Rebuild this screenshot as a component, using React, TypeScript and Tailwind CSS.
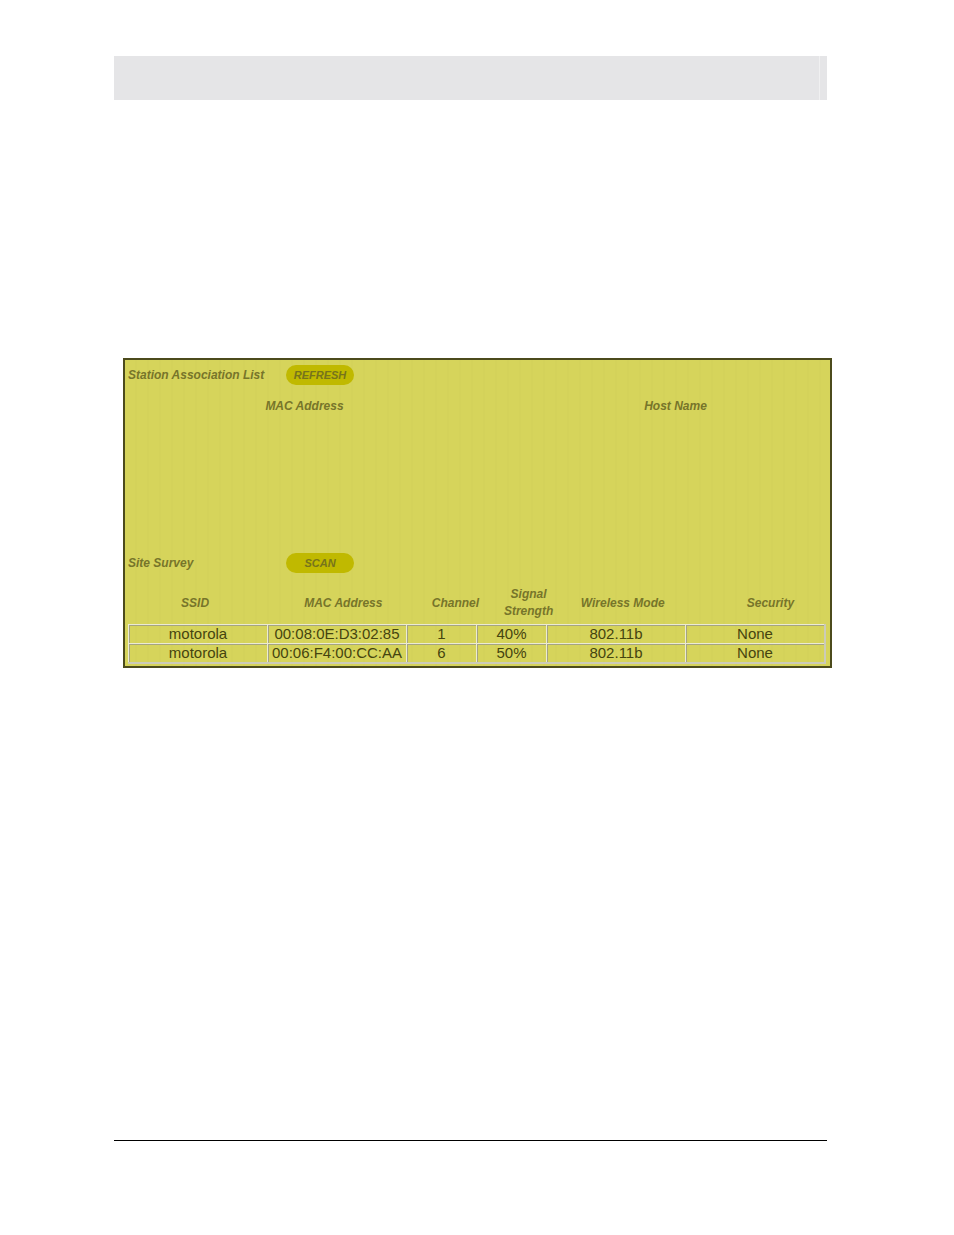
import React from 'react';

const networks = [
  { ssid: 'motorola', mac: '00:08:0E:D3:02:85', channel: '1', signal: '40%', mode: '802.11b', security: 'None' },
  { ssid: 'motorola', mac: '00:06:F4:00:CC:AA', channel: '6', signal: '50%', mode: '802.11b', security: 'None' },
];

const PillButton = ({ children }: { children: React.ReactNode }) => (
  <button
    type="button"
    className="h-5 w-[68px] rounded-full bg-[#c0b900] text-center text-[11px] leading-5 font-bold italic text-[#77741c]"
  >
    {children}
  </button>
);

const StationList = () => (
  <section>
    <div className="flex h-5 items-center">
      <h2 className="w-[158px] shrink-0 text-[12px] font-bold">Station Association List</h2>
      <PillButton>REFRESH</PillButton>
    </div>
    <table className="mt-[13px] w-full table-fixed text-[12px] leading-4">
      <thead>
        <tr>
          <th className="w-1/2 p-0 pl-1 text-center font-bold">MAC Address</th>
          <th className="w-1/2 p-0 pl-12 text-center font-bold">Host Name</th>
        </tr>
      </thead>
      <tbody />
    </table>
  </section>
);

const cell =
  'border-t border-l border-[#ecebd2] p-0 text-center whitespace-nowrap shadow-[inset_1px_1px_0_#a5a481]';

const SiteSurvey = () => (
  <section className="mt-[139px]">
    <div className="flex h-5 items-center">
      <h2 className="w-[158px] shrink-0 text-[12px] font-bold">Site Survey</h2>
      <PillButton>SCAN</PillButton>
    </div>
    <table className="mt-[13px] block w-full">
      <thead className="block text-[12px] leading-[17px]">
        <tr className="grid grid-cols-[134fr_162fr_62fr_84fr_104fr_151fr] items-center pb-1">
          <th className="p-0 text-center font-bold">SSID</th>
          <th className="p-0 text-center font-bold">MAC Address</th>
          <th className="p-0 text-center font-bold">Channel</th>
          <th className="p-0 text-center font-bold">
            Signal
            <br />
            Strength
          </th>
          <th className="p-0 text-center font-bold">Wireless Mode</th>
          <th className="p-0 pl-10 text-center font-bold">Security</th>
        </tr>
      </thead>
      <tbody className="block border-r-2 border-b-2 border-[#cccbb8] text-[15px] leading-[18px] text-[#45440f] not-italic">
        {networks.map((network) => (
          <tr key={network.mac} className="grid grid-cols-[139fr_139fr_70fr_70fr_139fr_139fr]">
            <td className={cell}>{network.ssid}</td>
            <td className={cell}>{network.mac}</td>
            <td className={cell}>{network.channel}</td>
            <td className={cell}>{network.signal}</td>
            <td className={cell}>{network.mode}</td>
            <td className={cell}>{network.security}</td>
          </tr>
        ))}
      </tbody>
    </table>
  </section>
);

const App = () => {
  return (
    <div className="flex min-h-screen flex-col bg-white pt-14 pr-[127px] pb-[94px] pl-[114px] font-['Liberation_Sans',Arial,sans-serif]">
      <header className="flex h-11 justify-end bg-[#e5e5e7]">
        <div className="w-2 border-l border-[#f0f0f1]" />
      </header>
      <main className="mt-[258px] -mr-[5px] ml-[9px] border-2 border-[#4c4b1c] bg-[#d6d45b] bg-[repeating-linear-gradient(90deg,#d6d45b_0_10px,#d4d25a_10px_12px)] pt-[5px] pr-1 pb-0.5 pl-[3px] italic text-[#77752a]">
        <StationList />
        <SiteSurvey />
      </main>
      <footer className="mt-auto border-t border-black" />
    </div>
  );
};

export default App;
